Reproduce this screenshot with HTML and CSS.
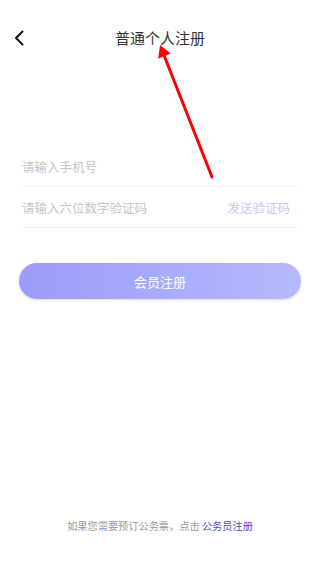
FILE: index.html
```html
<!DOCTYPE html>
<html lang="zh-CN">
<head>
    <meta charset="UTF-8">
    <meta name="viewport" content="width=device-width, initial-scale=1.0">
    <title>普通个人注册</title>
    <link rel="stylesheet" href="styles.css">
</head>
<body>
    <div class="page">
        <div class="header">
            <a class="back" href="#">
                <svg width="10" height="16" viewBox="0 0 10 16">
                    <path d="M8.5 1.5 L2 8 L8.5 14.5" fill="none" stroke="#111" stroke-width="2" stroke-linecap="round" stroke-linejoin="round"/>
                </svg>
            </a>
            <h1>普通个人注册</h1>
        </div>

        <form class="form">
            <div class="form-row">
                <input type="tel" placeholder="请输入手机号">
            </div>
            <div class="form-row">
                <input type="text" placeholder="请输入六位数字验证码">
                <span class="send-code">发送验证码</span>
            </div>
            <button type="button" class="btn-register">会员注册</button>
        </form>

        <p class="footer">如果您需要预订公务票，点击 <a href="#">公务员注册</a></p>

        <!-- annotation arrow -->
        <svg class="arrow" width="320" height="568" viewBox="0 0 320 568">
            <line x1="212" y1="177" x2="164.4" y2="56.2" stroke="#f00" stroke-width="3" stroke-linecap="round"/>
            <polygon points="160,45 170.6,53.6 158.2,58.8" fill="#f00"/>
        </svg>
    </div>
</body>
</html>
```

FILE: styles.css
```css
body {
    margin: 0;
    font-family: "Noto Sans CJK SC", "Noto Sans", sans-serif;
    background-color: #fff;
}

.page {
    position: relative;
    width: 320px;
    height: 568px;
    display: flex;
    flex-direction: column;
}

.header {
    height: 74px;
    display: flex;
    align-items: center;
    justify-content: center;
    position: relative;
}

.back {
    position: absolute;
    left: 14px;
    top: 30px;
    display: block;
    line-height: 0;
}

h1 {
    margin: 0;
    font-size: 15px;
    font-weight: normal;
    color: #333;
}

.form {
    margin: 72px 22px 0 22px;
}

.form-row {
    height: 40px;
    border-bottom: 1px solid #eee;
    display: flex;
    align-items: center;
}

.form-row input {
    flex: 1;
    min-width: 0;
    border: none;
    outline: none;
    padding: 0;
    font-family: inherit;
    font-size: 12.5px;
    color: #333;
    background: transparent;
}

.form-row input::placeholder {
    color: #c6c6c6;
}

.send-code {
    font-size: 12.5px;
    color: #c8c9f5;
    margin-right: 8px;
}

.btn-register {
    display: block;
    width: 282px;
    height: 36px;
    margin: 35px 0 0 -3px;
    border: none;
    border-radius: 18px;
    background: linear-gradient(90deg, #9a9cf8, #b5bafd);
    box-shadow: 0 1px 3px rgba(140, 145, 230, 0.35);
    color: #fff;
    font-family: inherit;
    font-size: 13px;
    cursor: pointer;
}

.footer {
    margin: auto 0 34px 0;
    text-align: center;
    font-size: 10.2px;
    line-height: 16px;
    color: #999;
}

.footer a {
    color: #4a4ad6;
    text-decoration: none;
}

.arrow {
    position: absolute;
    left: 0;
    top: 0;
    pointer-events: none;
}
```
